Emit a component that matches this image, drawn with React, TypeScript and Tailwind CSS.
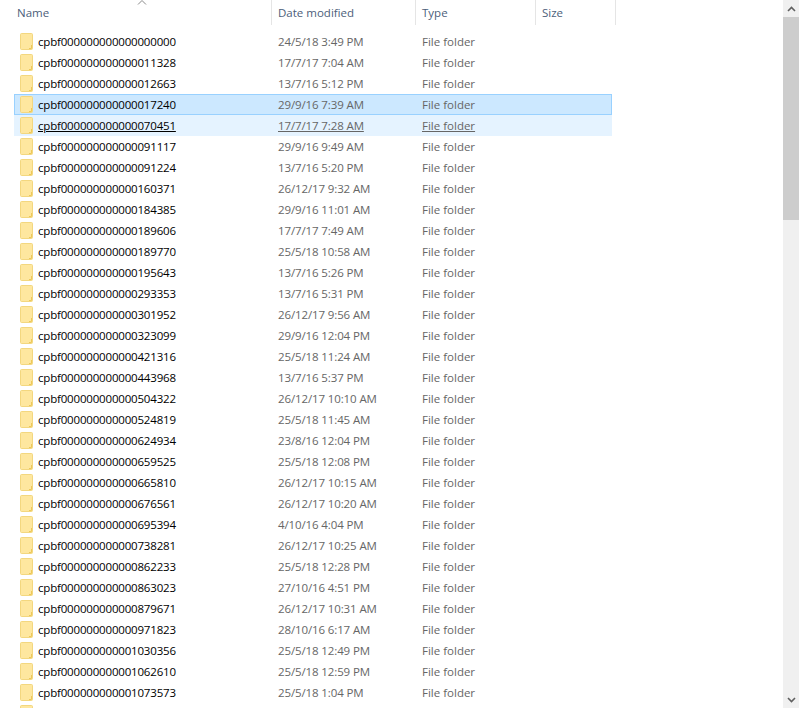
const rows: [string, string][] = [
  ["0", "24/5/18 3:49 PM"],
  ["11328", "17/7/17 7:04 AM"],
  ["12663", "13/7/16 5:12 PM"],
  ["17240", "29/9/16 7:39 AM"],
  ["70451", "17/7/17 7:28 AM"],
  ["91117", "29/9/16 9:49 AM"],
  ["91224", "13/7/16 5:20 PM"],
  ["160371", "26/12/17 9:32 AM"],
  ["184385", "29/9/16 11:01 AM"],
  ["189606", "17/7/17 7:49 AM"],
  ["189770", "25/5/18 10:58 AM"],
  ["195643", "13/7/16 5:26 PM"],
  ["293353", "13/7/16 5:31 PM"],
  ["301952", "26/12/17 9:56 AM"],
  ["323099", "29/9/16 12:04 PM"],
  ["421316", "25/5/18 11:24 AM"],
  ["443968", "13/7/16 5:37 PM"],
  ["504322", "26/12/17 10:10 AM"],
  ["524819", "25/5/18 11:45 AM"],
  ["624934", "23/8/16 12:04 PM"],
  ["659525", "25/5/18 12:08 PM"],
  ["665810", "26/12/17 10:15 AM"],
  ["676561", "26/12/17 10:20 AM"],
  ["695394", "4/10/16 4:04 PM"],
  ["738281", "26/12/17 10:25 AM"],
  ["862233", "25/5/18 12:28 PM"],
  ["863023", "27/10/16 4:51 PM"],
  ["879671", "26/12/17 10:31 AM"],
  ["971823", "28/10/16 6:17 AM"],
  ["1030356", "25/5/18 12:49 PM"],
  ["1062610", "25/5/18 12:59 PM"],
  ["1073573", "25/5/18 1:04 PM"],
];

function Folder() {
  return (
    <svg width="13" height="17" viewBox="0 0 13 17" className="shrink-0">
      <rect x="0.5" y="0.5" width="12" height="16" rx="1" fill="#fee79f" stroke="#f3d77f" />
      <path d="M11.5 12 V15.5 H9" fill="none" stroke="#edc85a" strokeWidth="1" />
    </svg>
  );
}

function HeaderCell({ label, w, pl }: { label: string; w: string; pl: string }) {
  return (
    <div className={`${w} ${pl} h-[25px] shrink-0 border-r border-[#e5e5e5] text-[#4c607a] text-[11.5px] pt-[4px] leading-[17px]`}>
      {label}
    </div>
  );
}

export default function App() {
  return (
    <div
      className="relative flex w-[799px] h-[708px] overflow-hidden bg-white"
      style={{ fontFamily: '"Open Sans", "Noto Sans", sans-serif' }}
    >
      <div className="flex-1 min-w-0">
        <div className="relative flex h-[25px]">
          <HeaderCell label="Name" w="w-[272px]" pl="pl-[17px]" />
          <HeaderCell label="Date modified" w="w-[144px]" pl="pl-[6px]" />
          <HeaderCell label="Type" w="w-[120px]" pl="pl-[6px]" />
          <HeaderCell label="Size" w="w-[80px]" pl="pl-[6px]" />
          <svg width="10" height="5" viewBox="0 0 10 5" className="absolute left-[137px] top-0">
            <path d="M1 4.5 L5 0.5 L9 4.5" fill="none" stroke="#8a8a8a" strokeWidth="1" />
          </svg>
        </div>
        <div className="mt-[6px] ml-[14px] w-[598px]">
          {rows.map(([id, date], i) => {
            const selected = i === 3;
            const hover = i === 4;
            return (
              <div
                key={id}
                className={`flex items-center h-[21px] pl-[6px] text-[11.5px] leading-[21px] ${
                  selected ? "bg-[#cce8ff] outline outline-1 -outline-offset-1 outline-[#99d1ff]" : hover ? "bg-[#e5f3ff]" : ""
                }`}
              >
                <Folder />
                <span className={`ml-[5px] w-[240px] shrink-0 text-black tracking-[-0.18px] ${hover ? "underline" : ""}`}>
                  {"cpbf" + id.padStart(18, "0")}
                </span>
                <span className={`w-[144px] shrink-0 text-[#666666] tracking-[-0.12px] ${hover ? "underline" : ""}`}>{date}</span>
                <span className={`text-[#666666] ${hover ? "underline" : ""}`}>File folder</span>
              </div>
            );
          })}
          <div className="flex items-center h-[21px] pl-[6px]">
            <Folder />
          </div>
        </div>
      </div>
      <div className="w-[16px] h-full shrink-0 bg-[#f0f0f0] flex flex-col justify-between">
        <div>
          <div className="h-[17px] flex items-center justify-center">
            <svg width="9" height="6" viewBox="0 0 9 6">
              <path d="M1 5 L4.5 1.5 L8 5" fill="none" stroke="#606060" strokeWidth="1.6" />
            </svg>
          </div>
          <div className="h-[203px] bg-[#cdcdcd]" />
        </div>
        <div className="h-[17px] flex items-center justify-center">
          <svg width="9" height="6" viewBox="0 0 9 6">
            <path d="M1 1 L4.5 4.5 L8 1" fill="none" stroke="#606060" strokeWidth="1.6" />
          </svg>
        </div>
      </div>
    </div>
  );
}
